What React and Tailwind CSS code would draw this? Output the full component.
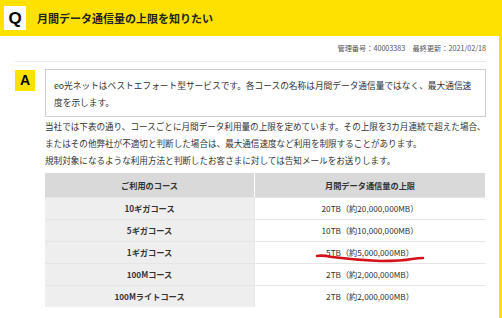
import React from "react";

const rows = [
  ["10ギガコース", "20TB（約20,000,000MB）"],
  ["5ギガコース", "10TB（約10,000,000MB）"],
  ["1ギガコース", "5TB（約5,000,000MB）"],
  ["100Mコース", "2TB（約2,000,000MB）"],
  ["100Mライトコース", "2TB（約2,000,000MB）"],
];

export default function App() {
  return (
    <div className="relative w-[502px] h-[318px] overflow-hidden bg-white font-['Noto_Sans_CJK_JP',sans-serif] text-[#333]">
      <div className="flex flex-col h-full border-r-[3px] border-[#ffe100]">
        <div className="h-[36px] shrink-0 bg-[#ffe100] flex items-center pl-[4px]">
          <div className="w-[22px] h-[24px] bg-white flex items-center justify-center text-[17px] font-bold text-black leading-none font-['Liberation_Sans',sans-serif]">
            Q
          </div>
          <div className="ml-[11px] text-[11px] font-bold text-[#222] leading-none">
            月間データ通信量の上限を知りたい
          </div>
        </div>
        <div className="ml-[15px] mr-[13px] mt-[7px] pb-[7px] border-b border-[#ebebeb] text-right text-[7.2px] leading-[11px] text-[#555]">
          管理番号：40003383　最終更新：2021/02/18
        </div>
        <div className="flex ml-[15px] mr-[13px] mt-[7px] gap-[10px]">
          <div className="w-[20px] h-[21px] shrink-0 bg-[#ffe100] flex items-center justify-center text-[14px] font-bold text-black font-['Liberation_Sans',sans-serif] mt-[1px]">
            A
          </div>
          <div className="flex-1 border border-[#cfcfcf] pl-[8px] pr-[8px] pt-[7px] pb-[5px] text-[8.7px] leading-[17px] whitespace-nowrap">
            eo光ネットはベストエフォート型サービスです。各コースの名称は月間データ通信量ではなく、最大通信速
            <br />
            度を示します。
          </div>
        </div>
        <div className="ml-[45px] mr-[10px] mt-[1px] text-[8.58px] leading-[17px] whitespace-nowrap">
          <p>当社では下表の通り、コースごとに月間データ利用量の上限を定めています。その上限を3カ月連続で超えた場合、</p>
          <p>またはその他弊社が不適切と判断した場合は、最大通信速度など利用を制限することがあります。</p>
          <p>規制対象になるような利用方法と判断したお客さまに対しては告知メールをお送りします。</p>
        </div>
        <div className="ml-[45px] w-[440px] mt-[4px] text-[8.2px]">
          <div className="flex h-[24px] bg-[#d9d9d9] font-bold">
            <div className="w-[210px] flex items-center justify-center border-r border-white">ご利用のコース</div>
            <div className="flex-1 flex items-center justify-center">月間データ通信量の上限</div>
          </div>
          {rows.map(([a, b]) => (
            <div key={a} className="flex h-[22px] border-t border-[#e6e6e6]">
              <div className="w-[210px] flex items-center justify-center bg-[#eeeeee] font-bold border-r border-[#e6e6e6]">{a}</div>
              <div className="flex-1 flex items-center justify-center bg-white">{b}</div>
            </div>
          ))}
        </div>
      </div>
      <svg className="absolute left-0 top-0 pointer-events-none" width="502" height="318" viewBox="0 0 502 318">
        <path
          d="M317 256 Q322 255 332 257 Q356 260 380 261 Q402 261 412 259 Q418 258 423 258"
          fill="none"
          stroke="#d3121a"
          strokeWidth="2.6"
          strokeLinecap="round"
        />
      </svg>
    </div>
  );
}
